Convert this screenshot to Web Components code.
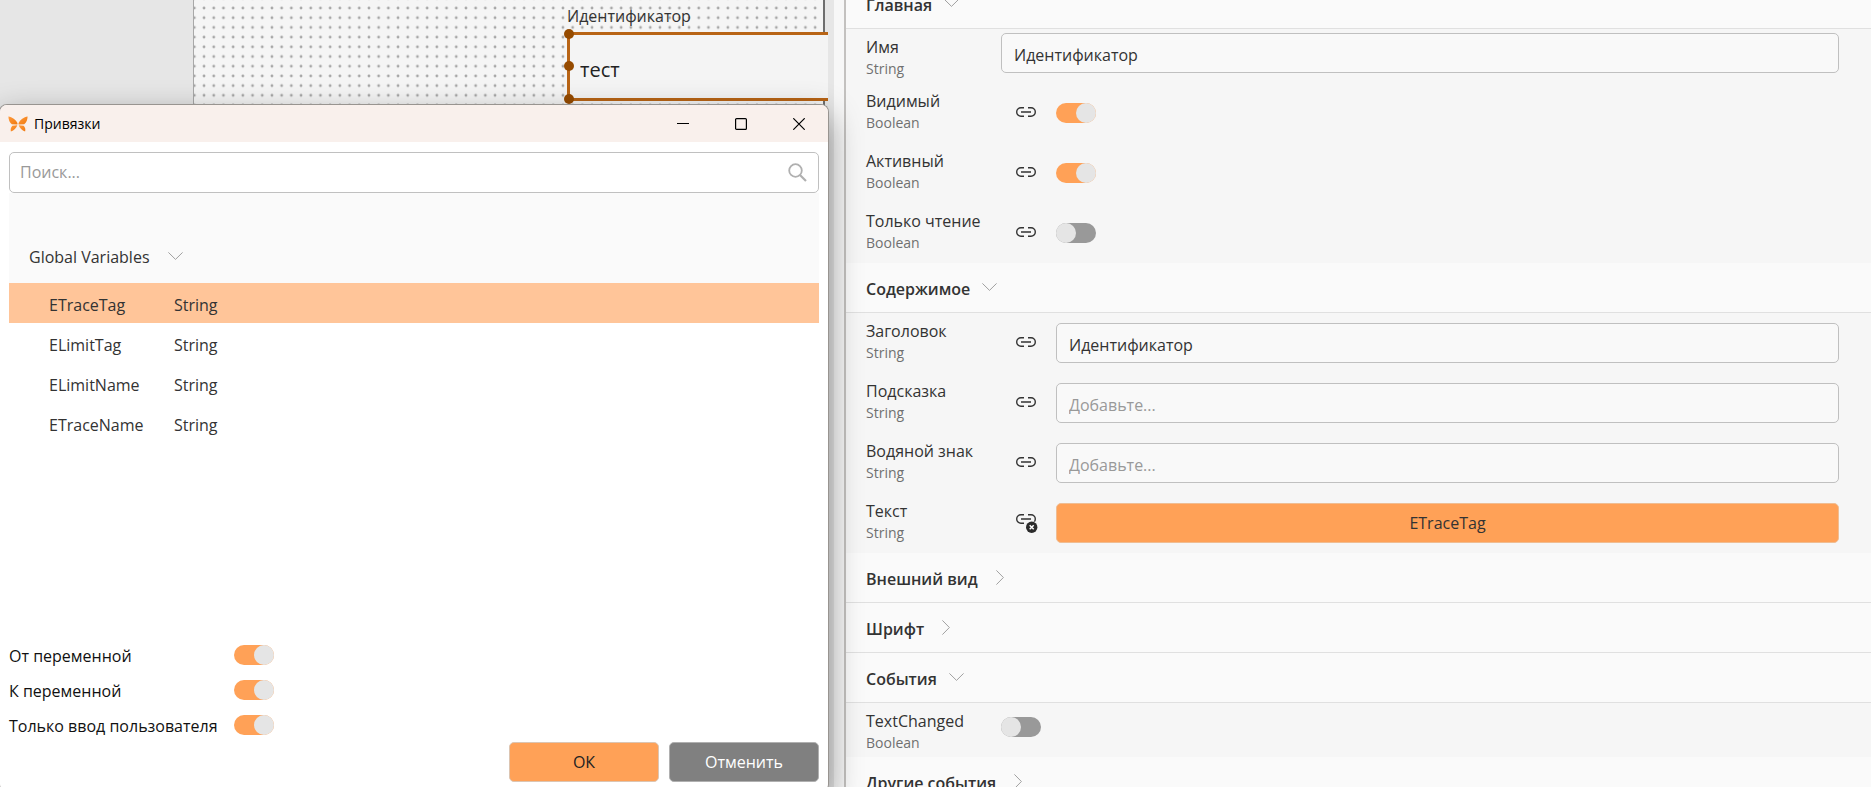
<!DOCTYPE html>
<html lang="ru">
<head>
    <meta charset="utf-8">
    <title>Привязки</title>
    <style>
        :root {
            --accent: #ffa157;
            --accent-light: #ffc599;
            --surface: #fafafa;
            --surface-gray: #f6f6f6;
            --line: #e0e0e0;
            --border: #c0c0c0;
            --text: #333333;
            --text-gray: #707070;
            --text-hint: #999999;
        }

        body {
            margin: 0;
            height: 100vh;
            overflow: hidden;
            font-family: "Open Sans", "Noto Sans", sans-serif;
            font-size: 16px;
            line-height: 22px;
            color: var(--text);
        }
    </style>
</head>
<body>
    <designer-app>
        <form-canvas slot="workspace"></form-canvas>
        <bindings-dialog slot="workspace"></bindings-dialog>

        <property-section heading="Главная" open>
            <property-row label="Имя" type="String" control="text" value="Идентификатор"></property-row>
            <property-row label="Видимый" type="Boolean" control="toggle" link="free" checked></property-row>
            <property-row label="Активный" type="Boolean" control="toggle" link="free" checked></property-row>
            <property-row label="Только чтение" type="Boolean" control="toggle" link="free"></property-row>
        </property-section>
        <property-section heading="Содержимое" open>
            <property-row label="Заголовок" type="String" control="text" link="free" value="Идентификатор"></property-row>
            <property-row label="Подсказка" type="String" control="text" link="free"></property-row>
            <property-row label="Водяной знак" type="String" control="text" link="free"></property-row>
            <property-row label="Текст" type="String" control="binding" link="bound" value="ETraceTag"></property-row>
        </property-section>
        <property-section heading="Внешний вид"></property-section>
        <property-section heading="Шрифт"></property-section>
        <property-section heading="События" open>
            <property-row label="TextChanged" type="Boolean" control="toggle"></property-row>
        </property-section>
        <property-section heading="Другие события"></property-section>
    </designer-app>

    <script>
        // styles shared by several shadow roots
        const baseStyles = `
            *, *::before { box-sizing: border-box; }
            button, input { font: inherit; color: inherit; margin: 0; }
            button { cursor: pointer; }
            svg { display: block; }
        `;

        const toggleStyles = `
            .toggle {
                appearance: none;
                display: block;
                width: 40px;
                height: 20px;
                border-radius: 10px;
                background: #999999;
                cursor: pointer;
            }
            .toggle::before {
                content: "";
                display: block;
                width: 20px;
                height: 20px;
                border-radius: 50%;
                background: #e5e5e5;
            }
            .toggle:checked { background: var(--accent); }
            .toggle:checked::before { margin-left: 20px; }
        `;

        const chevronDown = `
            <svg width="15" height="8" viewBox="0 0 15 8" fill="none" stroke="#a0a0a0" aria-hidden="true">
                <path d="M.4.4 7.5 7.4 14.6.4"/>
            </svg>`;

        const chevronRight = `
            <svg width="8" height="15" viewBox="0 0 8 15" fill="none" stroke="#a0a0a0" aria-hidden="true">
                <path d="M.4.4 7.4 7.5.4 14.6"/>
            </svg>`;

        const linkPaths = `
            <g fill="none" stroke="#333" stroke-width="1.4">
                <path d="M8 .7H5a4.3 4.3 0 0 0 0 8.6h3M12 .7h3a4.3 4.3 0 0 1 0 8.6h-3M5 5h10"/>
            </g>`;

        const linkIcon = `<svg width="20" height="10" viewBox="0 0 20 10" aria-hidden="true">${linkPaths}</svg>`;

        const linkBoundIcon = `
            <svg width="22" height="21" viewBox="0 -2 22 21" aria-hidden="true">
                ${linkPaths}
                <circle cx="15.7" cy="13.3" r="6.4" fill="#f6f6f6"/>
                <circle cx="15.7" cy="13.3" r="5.7" fill="#2b2b2b"/>
                <path d="M13.7 11.3l4 4M17.7 11.3l-4 4" stroke="#fff" stroke-width="1.5"/>
            </svg>`;

        class DesignerApp extends HTMLElement {
            constructor() {
                super();
                this.attachShadow({ mode: 'open' });
                this.shadowRoot.innerHTML = `
                    <style>
                        :host {
                            display: grid;
                            grid-template-columns: 845fr 1026fr;
                            height: 100vh;
                        }
                        .workspace {
                            position: relative;
                            z-index: 1;
                            min-width: 0;
                        }
                        .panel {
                            min-width: 0;
                            border-left: 1px solid #c3c1bf;
                            background: var(--surface);
                            overflow: hidden;
                        }
                        /* the list is scrolled a little past its top */
                        .scrolled { margin-top: -21px; }
                    </style>
                    <main class="workspace"><slot name="workspace"></slot></main>
                    <aside class="panel"><div class="scrolled"><slot></slot></div></aside>
                `;
            }
        }

        class FormCanvas extends HTMLElement {
            constructor() {
                super();
                this.attachShadow({ mode: 'open' });
                this.shadowRoot.innerHTML = `
                    <style>
                        ${baseStyles}
                        :host {
                            display: flex;
                            height: 100%;
                            overflow: hidden;
                            background: #e6e6e6;
                        }
                        .page {
                            position: relative;
                            flex: 1;
                            margin-left: 193px;
                            border-left: 1px solid #a8a8a8;
                            border-right: 2px solid #6e6e6e;
                            background: #f5f5f5;
                        }
                        .dots { width: 100%; height: 100%; }
                        .gap { width: 9px; }
                        .gutter {
                            width: 11px;
                            background: #f7f7f7;
                            border-right: 1px solid #c3c1bf;
                        }
                        .field {
                            position: absolute;
                            left: 373px;
                            right: -5px;
                            top: 5px;
                        }
                        .field label { display: block; line-height: 22px; }
                        .box {
                            position: relative;
                            display: flex;
                            height: 69px;
                            margin-top: 5px;
                            border: 3px solid #b86415;
                            border-right: 0;
                            background: #f4f4f4;
                        }
                        .box input {
                            flex: 1;
                            min-width: 0;
                            padding: 6px 10px 0;
                            border: 0;
                            background: none;
                            color: #222222;
                            font-size: 20px;
                        }
                        .handle {
                            position: absolute;
                            left: -6px;
                            width: 10px;
                            height: 10px;
                            border-radius: 50%;
                            background: #964b00;
                        }
                        .handle.top { top: -6px; }
                        .handle.middle { top: 26px; }
                        .handle.bottom { bottom: -6px; }
                    </style>
                    <div class="page">
                        <svg class="dots" aria-hidden="true">
                            <defs>
                                <pattern id="grid" x="5.2" y="3.2" width="9.7" height="9.7" patternUnits="userSpaceOnUse">
                                    <circle cx="4.85" cy="4.85" r="1.4" fill="#a6a6a6"/>
                                </pattern>
                            </defs>
                            <rect width="100%" height="100%" fill="url(#grid)"/>
                        </svg>
                        <div class="field">
                            <label for="field">Идентификатор</label>
                            <div class="box">
                                <input id="field" value="тест">
                                <span class="handle top"></span>
                                <span class="handle middle"></span>
                                <span class="handle bottom"></span>
                            </div>
                        </div>
                    </div>
                    <div class="gap"></div>
                    <div class="gutter"></div>
                `;
            }
        }

        class BindingsDialog extends HTMLElement {
            constructor() {
                super();
                this.attachShadow({ mode: 'open' });

                const variables = ['ETraceTag', 'ELimitTag', 'ELimitName', 'ETraceName'];
                const rows = variables.map((name, i) => `
                    <tr class="${i === 0 ? 'selected' : ''}"><td>${name}</td><td>String</td></tr>
                `).join('');

                this.shadowRoot.innerHTML = `
                    <style>
                        ${baseStyles}
                        ${toggleStyles}
                        :host {
                            position: absolute;
                            top: 104px;
                            left: -1px;
                            right: 16px;
                            bottom: -5px;
                            display: flex;
                            flex-direction: column;
                            box-sizing: border-box;
                            border: 1px solid #989490;
                            border-bottom: 0;
                            border-radius: 8px;
                            overflow: hidden;
                            background: #ffffff;
                            box-shadow: 0 12px 32px rgba(0, 0, 0, 0.42);
                        }
                        header {
                            display: flex;
                            align-items: center;
                            gap: 6px;
                            height: 37px;
                            padding-left: 8px;
                            background: #f9f0ec;
                            color: #000000;
                        }
                        h1 {
                            flex: 1;
                            margin: 0;
                            font-size: 14px;
                            font-weight: 400;
                        }
                        .window-buttons { display: flex; align-self: stretch; }
                        .window-buttons button {
                            display: grid;
                            place-items: center;
                            width: 58px;
                            padding: 0;
                            border: 0;
                            background: none;
                        }
                        .content {
                            flex: 1;
                            display: flex;
                            flex-direction: column;
                            padding: 10px 9px;
                        }
                        .search {
                            display: flex;
                            align-items: center;
                            height: 41px;
                            padding-right: 11px;
                            border: 1px solid var(--border);
                            border-radius: 5px;
                        }
                        .search input {
                            flex: 1;
                            min-width: 0;
                            padding: 0 10px 2px;
                            border: 0;
                            outline: 0;
                            background: none;
                        }
                        .search input::placeholder { color: var(--text-hint); opacity: 1; }
                        .group {
                            display: flex;
                            align-items: flex-end;
                            gap: 18px;
                            height: 90px;
                            padding: 0 20px 15px;
                            border: 0;
                            background: var(--surface);
                            text-align: left;
                        }
                        .group svg { margin-bottom: 8px; }
                        table { width: 100%; border-collapse: collapse; }
                        td { height: 40px; padding: 4px 0 0; }
                        td:first-child { width: 165px; padding-left: 40px; }
                        .selected { background: var(--accent-light); }
                        .options {
                            display: grid;
                            grid-template-columns: 225px 1fr;
                            align-items: center;
                            row-gap: 15px;
                            margin-top: auto;
                            color: #111111;
                        }
                        .options label { height: 20px; line-height: 22px; }
                        footer {
                            display: flex;
                            justify-content: flex-end;
                            gap: 10px;
                            margin-top: 7px;
                        }
                        footer button {
                            width: 150px;
                            height: 40px;
                            border: 1px solid #dcc5b2;
                            border-radius: 5px;
                            background: var(--accent);
                            color: #222222;
                        }
                        footer .cancel {
                            border-color: #b0b0b0;
                            background: #808080;
                            color: #ffffff;
                        }
                    </style>
                    <header>
                        <svg width="20" height="16" viewBox="0 0 20 16" aria-hidden="true">
                            <defs>
                                <linearGradient id="wing" x1="0" y1="0" x2="1" y2="1">
                                    <stop offset="0" stop-color="#ff9a3c"/>
                                    <stop offset="1" stop-color="#f07a10"/>
                                </linearGradient>
                            </defs>
                            <g fill="url(#wing)">
                                <path d="M.4.5C4 1 8 4 9.500 7.200L9.400 8.400 3.800 8.300C1.600 6.800.5 3.500.4.500Z"/>
                                <path d="M19.600.5C16 1 12 4 10.500 7.200L10.600 8.400 16.200 8.300C18.400 6.800 19.500 3.500 19.600.500Z"/>
                                <path d="M9.300 9.200C8.300 12 6 14.600 2.900 15.400 2.300 13.200 2.900 11 4.400 9.700Z"/>
                                <path d="M10.700 9.200C11.700 12 14 14.600 17.100 15.400 17.700 13.200 17.100 11 15.600 9.700Z"/>
                            </g>
                        </svg>
                        <h1>Привязки</h1>
                        <div class="window-buttons">
                            <button aria-label="Свернуть">
                                <svg width="12" height="12" viewBox="0 0 12 12" stroke="#000"><path d="M0 5.500h12"/></svg>
                            </button>
                            <button aria-label="Развернуть">
                                <svg width="12" height="12" viewBox="0 0 12 12" fill="none" stroke="#000" stroke-width="1.200"><rect x=".6" y=".6" width="10.800" height="10.800" rx="1"/></svg>
                            </button>
                            <button aria-label="Закрыть">
                                <svg width="12" height="12" viewBox="0 0 12 12" stroke="#000" stroke-width="1.200"><path d="M.3.3l11.400 11.400M11.700.3L.3 11.700"/></svg>
                            </button>
                        </div>
                    </header>
                    <div class="content">
                        <div class="search">
                            <input type="text" aria-label="Поиск" placeholder="Поиск...">
                            <svg width="19" height="19" viewBox="0 0 19 19" fill="none" stroke="#b0b0b0" aria-hidden="true">
                                <circle cx="7.500" cy="7.500" r="6.300" stroke-width="1.800"/>
                                <path d="M12 12l6 6" stroke-width="2.200"/>
                            </svg>
                        </div>
                        <button class="group" aria-expanded="true">Global Variables ${chevronDown}</button>
                        <table><tbody>${rows}</tbody></table>
                        <div class="options">
                            <label for="from">От переменной</label>
                            <input class="toggle" type="checkbox" id="from" checked>
                            <label for="to">К переменной</label>
                            <input class="toggle" type="checkbox" id="to" checked>
                            <label for="user-only">Только ввод пользователя</label>
                            <input class="toggle" type="checkbox" id="user-only" checked>
                        </div>
                        <footer>
                            <button>ОК</button>
                            <button class="cancel">Отменить</button>
                        </footer>
                    </div>
                `;
            }

            connectedCallback() {
                const rows = this.shadowRoot.querySelectorAll('tr');
                rows.forEach((row) => {
                    row.addEventListener('click', () => {
                        rows.forEach((other) => other.classList.toggle('selected', other === row));
                    });
                });
            }
        }

        class PropertySection extends HTMLElement {
            constructor() {
                super();
                this.attachShadow({ mode: 'open' });
            }

            connectedCallback() {
                this.shadowRoot.innerHTML = `
                    <style>
                        ${baseStyles}
                        :host { display: block; }
                        h2 { margin: 0; font-size: 16px; }
                        h2 button {
                            display: flex;
                            align-items: center;
                            width: 100%;
                            height: 50px;
                            padding: 0 20px;
                            border: 0;
                            border-bottom: 1px solid var(--line);
                            background: var(--surface);
                            font-weight: 600;
                            text-align: left;
                        }
                        h2 span { padding-top: 3px; }
                        .down, .right { display: none; padding-bottom: 1px; }
                        .right { margin-left: 18px; }
                        .down { margin-left: 12px; }
                        :host([open]) .down, :host(:not([open])) .right { display: block; }
                        .rows { background: var(--surface-gray); }
                        :host(:not([open])) .rows { display: none; }
                    </style>
                    <h2>
                        <button>
                            <span>${this.getAttribute('heading')}</span>
                            <div class="down">${chevronDown}</div>
                            <div class="right">${chevronRight}</div>
                        </button>
                    </h2>
                    <div class="rows"><slot></slot></div>
                `;
                this.shadowRoot.querySelector('button').addEventListener('click', () => {
                    this.toggleAttribute('open');
                });
            }
        }

        class PropertyRow extends HTMLElement {
            constructor() {
                super();
                this.attachShadow({ mode: 'open' });
            }

            renderControl() {
                const value = this.getAttribute('value') || '';
                switch (this.getAttribute('control')) {
                    case 'toggle':
                        return `<input class="toggle" type="checkbox" id="control" ${this.hasAttribute('checked') ? 'checked' : ''}>`;
                    case 'binding':
                        return `<button class="binding" id="control">${value}</button>`;
                    default:
                        return `<input class="text" type="text" id="control" placeholder="Добавьте..." value="${value}">`;
                }
            }

            renderLink() {
                const link = this.getAttribute('link');
                if (!link) return '';
                return `<button class="link" aria-label="Привязка">${link === 'bound' ? linkBoundIcon : linkIcon}</button>`;
            }

            connectedCallback() {
                this.shadowRoot.innerHTML = `
                    <style>
                        ${baseStyles}
                        ${toggleStyles}
                        :host {
                            display: flex;
                            align-items: center;
                            box-sizing: border-box;
                            height: 54px;
                            padding: 0 32px 6px 20px;
                        }
                        :host([link]) { height: 60px; padding-bottom: 0; }
                        label {
                            flex: none;
                            align-self: flex-start;
                            width: 135px;
                            padding-top: 7px;
                        }
                        .type {
                            display: block;
                            color: var(--text-gray);
                            font-size: 14px;
                            line-height: 22px;
                        }
                        .link {
                            flex: none;
                            width: 55px;
                            padding: 0 0 2px 15px;
                            border: 0;
                            background: none;
                        }
                        .text, .binding {
                            flex: 1;
                            min-width: 0;
                            height: 40px;
                            border: 1px solid var(--border);
                            border-radius: 5px;
                        }
                        .text { padding: 4px 12px 0; background: #f9f9f9; }
                        .text::placeholder { color: var(--text-hint); opacity: 1; }
                        .binding { border-color: #f0bd92; background: var(--accent); }
                    </style>
                    <label for="control">${this.getAttribute('label')}<span class="type">${this.getAttribute('type')}</span></label>
                    ${this.renderLink()}
                    ${this.renderControl()}
                `;
            }
        }

        customElements.define('designer-app', DesignerApp);
        customElements.define('form-canvas', FormCanvas);
        customElements.define('bindings-dialog', BindingsDialog);
        customElements.define('property-section', PropertySection);
        customElements.define('property-row', PropertyRow);
    </script>
</body>
</html>
